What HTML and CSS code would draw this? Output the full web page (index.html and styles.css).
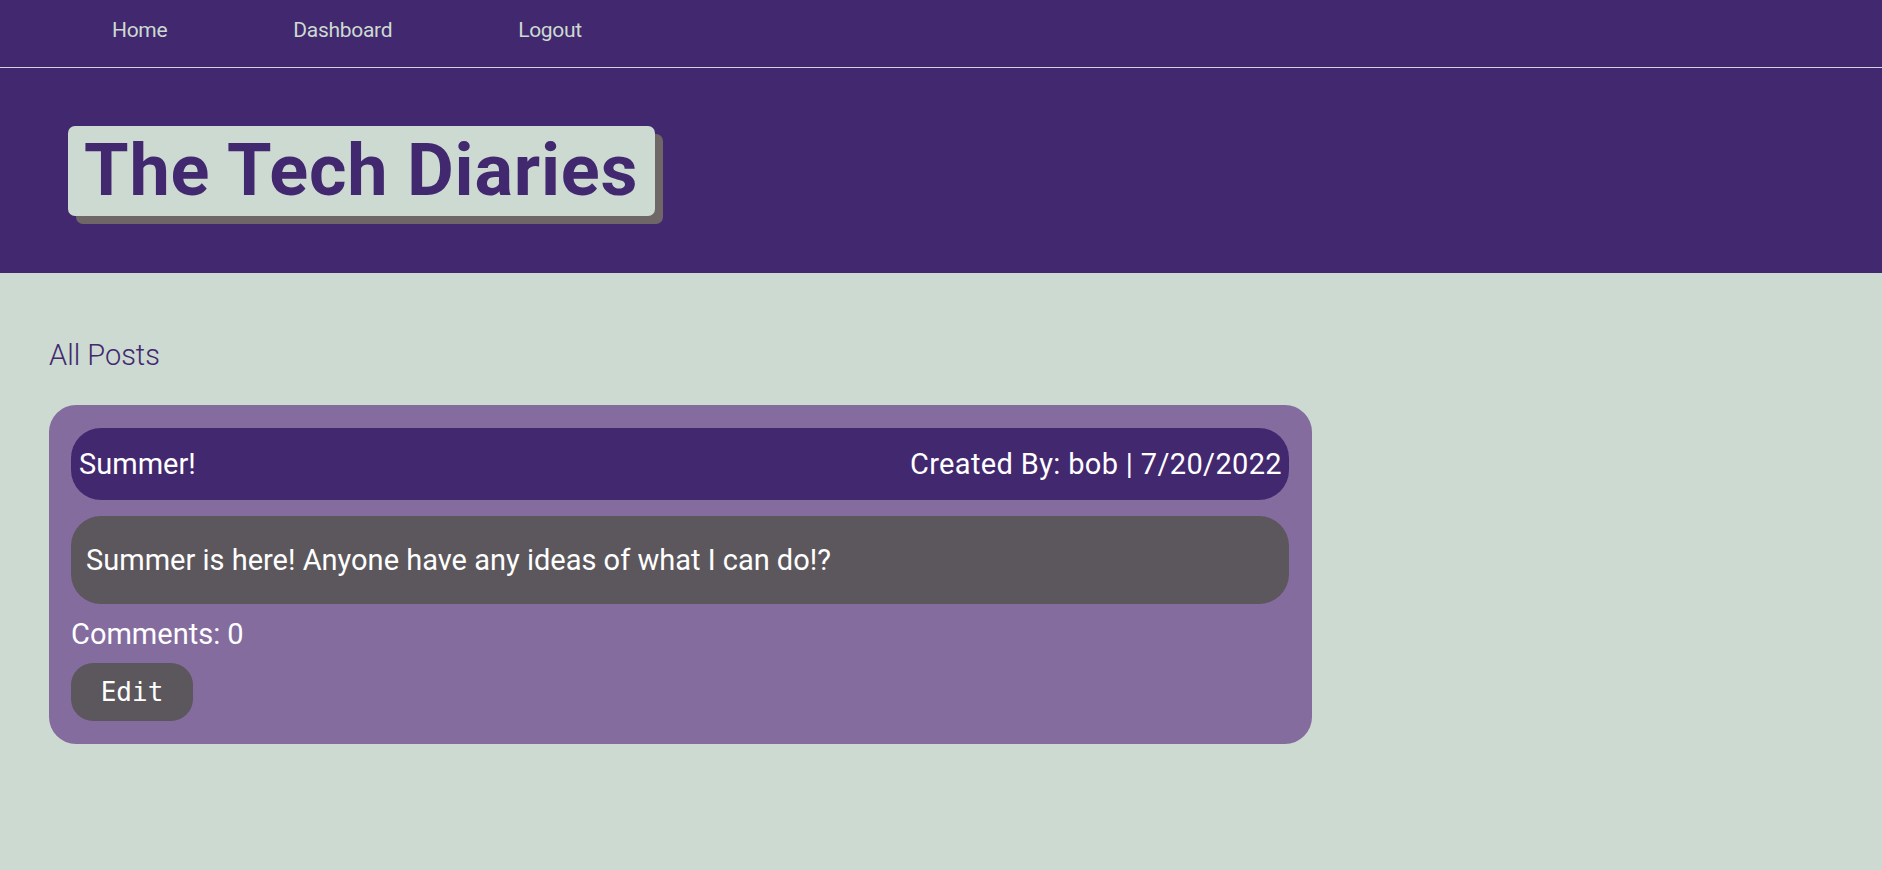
FILE: index.html
```html
<!DOCTYPE html>
<html lang="en">
<head>
<meta charset="utf-8">
<title>The Tech Diaries</title>
<link rel="stylesheet" href="styles.css">
</head>
<body>
<header class="site-header">
  <nav class="top-nav">
    <a class="nav-link" href="#">Home</a>
    <a class="nav-link" href="#">Dashboard</a>
    <a class="nav-link" href="#">Logout</a>
  </nav>
  <div class="hero">
    <h1 class="site-title">The Tech Diaries</h1>
  </div>
</header>
<main class="content">
  <h2 class="section-title">All Posts</h2>
  <article class="post-card">
    <div class="post-head">
      <span class="post-title">Summer!</span>
      <span class="post-meta">Created By: bob | 7/20/2022</span>
    </div>
    <div class="post-body">Summer is here! Anyone have any ideas of what I can do!?</div>
    <div class="post-comments">Comments: 0</div>
    <button class="edit-btn">Edit</button>
  </article>
</main>
</body>
</html>
```

FILE: styles.css
```css
* { box-sizing: border-box; }
html, body { margin: 0; padding: 0; }
body {
  background: #ccdad1;
  font-family: Roboto, "Noto Sans", sans-serif;
  min-height: 870px;
}
.site-header { background: #42286f; }
.top-nav {
  height: 68px;
  border-bottom: 1px solid #d4d2dc;
  display: flex;
  align-items: center;
  gap: 126px;
  padding-left: 112px;
  padding-bottom: 7px;
}
.nav-link {
  color: #ccdad1;
  text-decoration: none;
  font-size: 21px;
  letter-spacing: -0.3px;
}
.hero {
  padding: 58px 68px 57px;
}
.site-title {
  display: inline-block;
  margin: 0;
  background: #ccdad1;
  color: #42286f;
  border-radius: 7px;
  box-shadow: 8px 8px 0 #6f6767;
  font-size: 72px;
  font-weight: 700;
  line-height: 90px;
  height: 90px;
  letter-spacing: 0.8px;
  padding: 0 17px 0 16px;
}
.content {
  padding: 66px 49px 0;
}
.section-title {
  margin: 0 0 33px;
  font-size: 29px;
  font-weight: 300;
  color: #42286f;
  line-height: 33px;
}
.post-card {
  width: 1263px;
  background: #846c9f;
  border-radius: 27px;
  padding: 23px 23px 23px 22px;
  color: #ffffff;
}
.post-head {
  height: 72px;
  background: #42286f;
  border-radius: 30px;
  display: flex;
  justify-content: space-between;
  align-items: center;
  padding: 0 7px 0 8px;
  font-size: 29px;
}
.post-meta { letter-spacing: 0.35px; }
.post-body {
  margin-top: 16px;
  height: 88px;
  background: #5c575c;
  border-radius: 30px;
  display: flex;
  align-items: center;
  padding: 0 15px;
  font-size: 29px;
}
.post-comments {
  margin-top: 14px;
  font-size: 29px;
  line-height: 33px;
}
.edit-btn {
  display: block;
  margin-top: 12px;
  width: 122px;
  height: 58px;
  border: none;
  border-radius: 22px;
  background: #5c575c;
  color: #ffffff;
  font-family: "DejaVu Sans Mono", monospace;
  font-size: 26px;
  padding: 0;
}
```
